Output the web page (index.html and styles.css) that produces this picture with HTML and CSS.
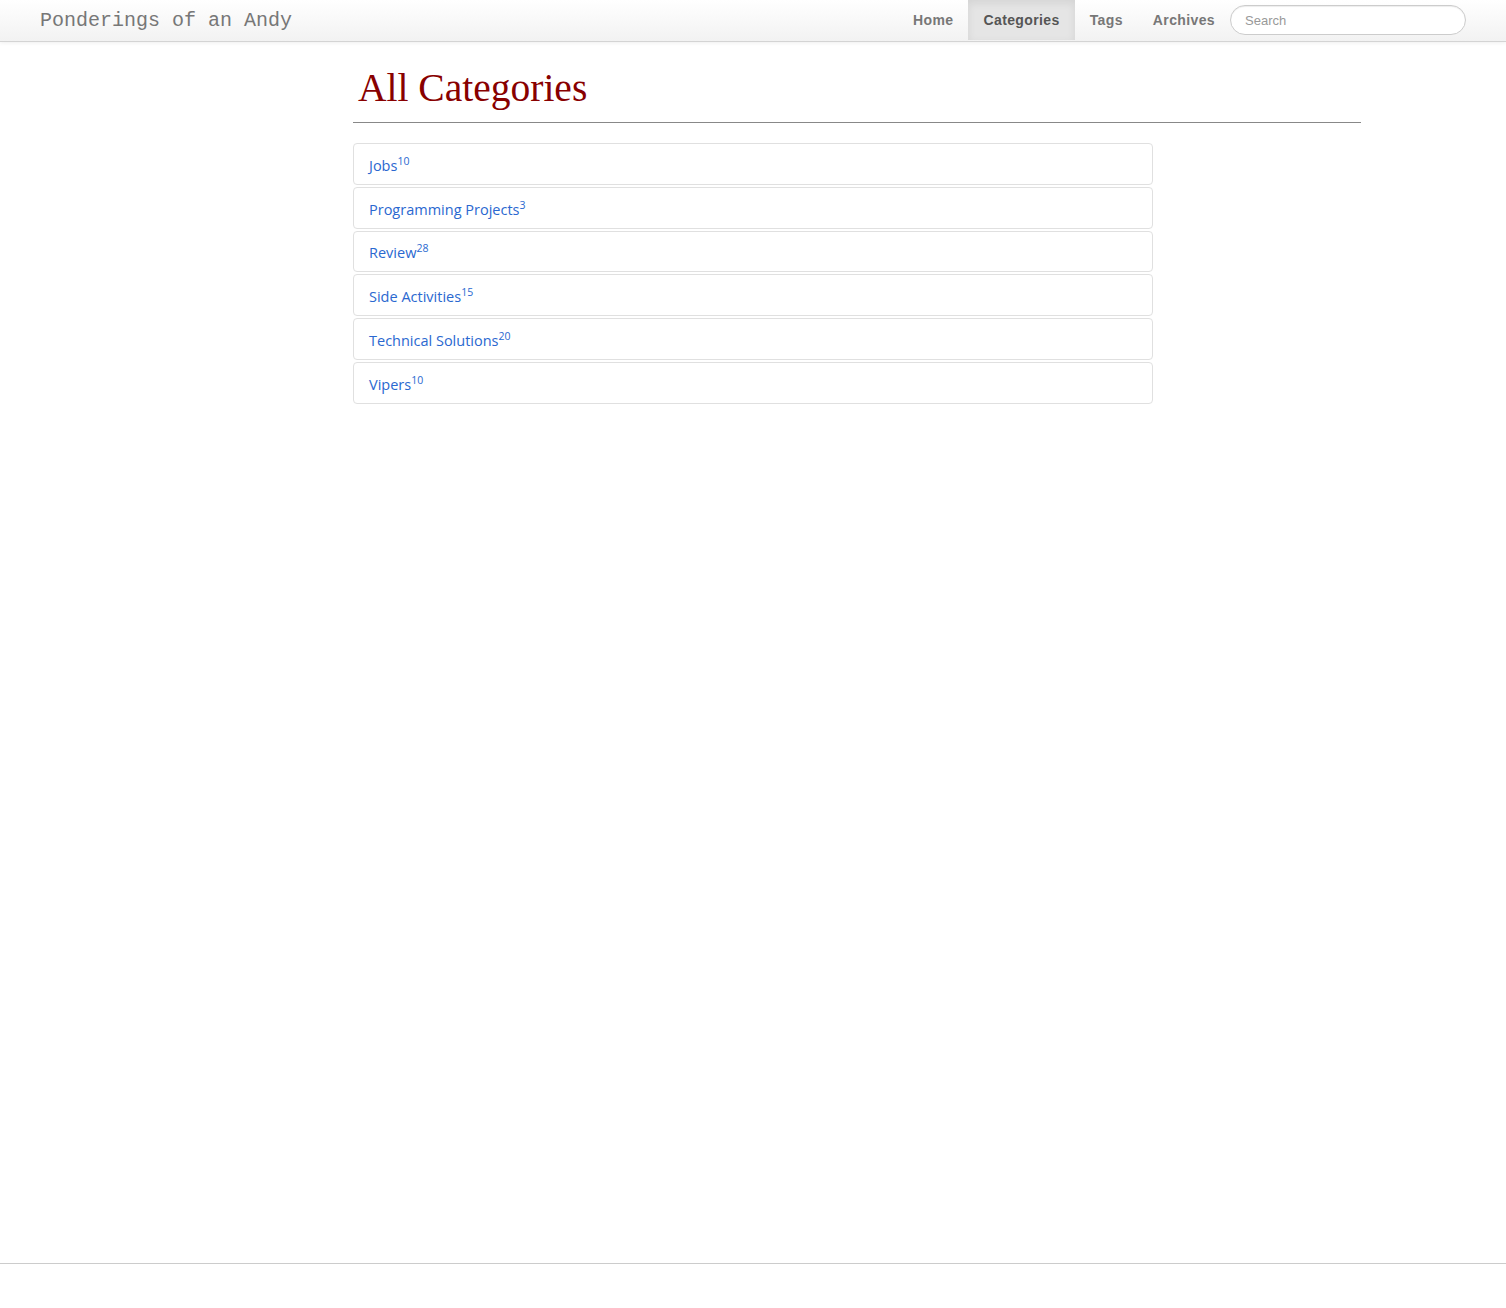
FILE: index.html
```html
<!DOCTYPE html>
<html lang="en">
<head>
<meta charset="utf-8">
<title>All Categories - Ponderings of an Andy</title>
<link rel="stylesheet" href="styles.css">
</head>
<body>
<div class="page">
  <header class="navbar">
    <a class="brand" href="#">Ponderings of an Andy</a>
    <nav class="nav">
      <a class="nav-item" href="#">Home</a>
      <a class="nav-item active" href="#">Categories</a>
      <a class="nav-item" href="#">Tags</a>
      <a class="nav-item" href="#">Archives</a>
      <input class="search" type="text" placeholder="Search">
    </nav>
  </header>
  <main class="content">
    <h1 class="title">All Categories</h1>
    <hr class="rule">
    <ul class="cat-list">
      <li class="cat"><a href="#">Jobs<sup>10</sup></a></li>
      <li class="cat"><a href="#">Programming Projects<sup>3</sup></a></li>
      <li class="cat"><a href="#">Review<sup>28</sup></a></li>
      <li class="cat"><a href="#">Side Activities<sup>15</sup></a></li>
      <li class="cat"><a href="#">Technical Solutions<sup>20</sup></a></li>
      <li class="cat"><a href="#">Vipers<sup>10</sup></a></li>
    </ul>
  </main>
  <footer class="footer"></footer>
</div>
</body>
</html>
```
FILE: styles.css
```css
* { box-sizing: border-box; }
html, body { margin: 0; padding: 0; background: #fff; }
body { font-family: "Open Sans", "DejaVu Sans", sans-serif; }

.page {
  min-height: 100vh;
  display: flex;
  flex-direction: column;
}

.navbar {
  height: 42px;
  display: flex;
  align-items: flex-start;
  justify-content: space-between;
  padding: 0 40px;
  background: linear-gradient(#ffffff, #f2f2f2);
  border-bottom: 1px solid #d4d4d4;
  box-shadow: 0 1px 4px rgba(0,0,0,0.065);
}

.brand {
  font-family: "Liberation Mono", "DejaVu Sans Mono", monospace;
  font-size: 20px;
  line-height: 41px;
  color: #777;
  text-decoration: none;
}

.nav {
  display: flex;
  align-items: flex-start;
  height: 41px;
}

.nav-item {
  font-family: "Liberation Sans", Arial, sans-serif;
  font-weight: bold;
  font-size: 14px;
  letter-spacing: 0.38px;
  color: #777;
  text-decoration: none;
  padding: 0 15px;
  height: 40px;
  line-height: 40px;
}

.nav-item.active {
  background: #e5e5e5;
  color: #555;
  box-shadow: inset 0 3px 8px rgba(0,0,0,0.08);
}

.search {
  margin: 5px 0 0 0;
  width: 236px;
  height: 30px;
  border: 1px solid #cccccc;
  border-radius: 15px;
  padding: 0 14px;
  font-family: "Liberation Sans", Arial, sans-serif;
  font-size: 13px;
  color: #555;
  background: #fff;
  box-shadow: inset 0 1px 1px rgba(0,0,0,0.075);
  outline: none;
}
.search::placeholder { color: #999; }

.content {
  flex: 1;
  padding: 0 145px 0 353px;
}

.title {
  font-family: "Liberation Serif", "Times New Roman", serif;
  font-weight: normal;
  font-size: 39.5px;
  line-height: 46px;
  color: #880000;
  margin: 23px 0 0 5px;
}

.rule {
  margin: 11px 0 20px 0;
  border: 0;
  border-top: 1px solid #888;
  height: 0;
}

.cat-list {
  list-style: none;
  margin: 0;
  padding: 0;
  width: 800px;
  display: flex;
  flex-direction: column;
  gap: 2px;
}

.cat {
  height: 41.75px;
  border: 1px solid #e0e0e0;
  border-radius: 4px;
  padding: 0 15px;
  display: flex;
  align-items: center;
}

.cat a {
  font-family: "Open Sans", "DejaVu Sans", sans-serif;
  font-size: 14.5px;
  color: #2a68d0;
  text-decoration: none;
  padding-top: 3px;
}

.cat sup {
  font-size: 10.5px;
  line-height: 0;
}

.footer {
  height: 45px;
  border-top: 1px solid #cccccc;
}
```
